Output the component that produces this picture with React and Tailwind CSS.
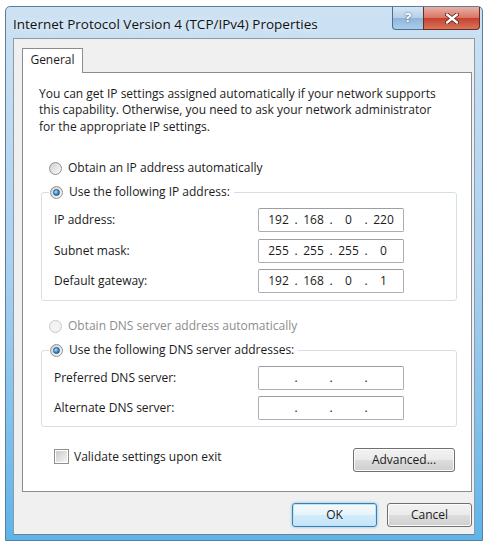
import React from "react";

const ui = "font-['Open_Sans',sans-serif] text-[12px] text-[#1b1b1b]";

function Radio({ checked, disabled }) {
  return (
    <span
      className={`flex h-[13px] w-[13px] shrink-0 items-center justify-center rounded-full border ${
        disabled
          ? "border-[#c9c9c9] bg-[#f3f3f3]"
          : "border-[#8e8f8f] bg-linear-to-br from-[#cfcfcf] to-[#fbfbfb]"
      }`}
    >
      {checked && (
        <span className="h-[7px] w-[7px] rounded-full border border-[#1c5b90] bg-[radial-gradient(circle_at_35%_35%,#b4e2fa,#2f82c6_60%,#15568f)]" />
      )}
    </span>
  );
}

function IpField({ parts = ["", "", "", ""] }) {
  return (
    <div className="flex h-[24px] w-[146px] items-center rounded-[2px] border border-[#abadb3] border-t-[#9a9ea5] bg-white pl-[4px]">
      {parts.map((p, i) => (
        <React.Fragment key={i}>
          <span className="w-[31px] text-center">{p}</span>
          {i < 3 && <span className="w-[4px] text-center">.</span>}
        </React.Fragment>
      ))}
    </div>
  );
}

function Row({ label, parts }) {
  return (
    <div className="flex h-[24px] items-center">
      <span className="w-[204px]">{label}</span>
      <IpField parts={parts} />
    </div>
  );
}

const btn =
  "flex h-[24px] items-center justify-center rounded-[3px] border border-[#707070] bg-[linear-gradient(#f2f2f2_0%,#ebebeb_50%,#dddddd_50%,#cfcfcf_100%)] shadow-[inset_0_0_0_1px_#fbfbfb]";

export default function App() {
  return (
    <div className={`h-[550px] w-[492px] bg-white pl-[5px] pt-[6px] ${ui}`}>
      <div className="flex h-[535px] w-[478px] flex-col rounded-t-[5px] border border-[#5d7d9c] bg-linear-to-b from-[#cde2f3] via-[#a8d0ef] to-[#5cb5ea]">
        {/* title bar */}
        <div className="flex h-[31px] items-start justify-between">
          <span className="pl-[7px] pt-[7px] text-[13.5px] text-[#111] [text-shadow:0_0_6px_#ffffff]">
            Internet Protocol Version 4 (TCP/IPv4) Properties
          </span>
          <div className="mr-[2px] flex">
            <div className="flex h-[23px] w-[31px] items-center justify-center rounded-bl-[4px] border border-t-0 border-r-0 border-[#4d6e8f] bg-[linear-gradient(#d4e6f5_0%,#b3cfe8_50%,#8fb4d8_50%,#a9cdea_100%)] text-[13px] font-bold text-white [text-shadow:0_0_2px_#2a4a6a]">
              ?
            </div>
            <div className="flex h-[23px] w-[57px] items-center justify-center rounded-br-[4px] border border-t-0 border-[#6b2a22] bg-[linear-gradient(#eab0a4_0%,#d87464_50%,#c4402e_50%,#d9755a_100%)]">
              <svg width="14" height="11" viewBox="0 0 14 11">
                <path
                  d="M2 1.5 L12 9.5 M12 1.5 L2 9.5"
                  stroke="#5a1d16"
                  strokeWidth="4"
                  strokeLinecap="round"
                />
                <path
                  d="M2 1.5 L12 9.5 M12 1.5 L2 9.5"
                  stroke="#ffffff"
                  strokeWidth="2.4"
                  strokeLinecap="round"
                />
              </svg>
            </div>
          </div>
        </div>

        {/* client area */}
        <div className="mx-[7px] flex h-[497px] flex-col border border-[#8e9aa6] border-b-[#6f7f8e] bg-[#f0f0f0] pl-[8px] pt-[9px]">
          <div className="relative z-10 flex h-[25px] w-[61px] items-center justify-center border border-b-0 border-[#898c95] bg-white pb-[2px]">
            General
          </div>
          <div className="-mt-px h-[420px] w-[450px] border border-[#898c95] bg-white pl-[16px] pt-[13px]">
            <p className="whitespace-nowrap leading-[16.4px]">
              You can get IP settings assigned automatically if your network supports
              <br />
              this capability. Otherwise, you need to ask your network administrator
              <br />
              for the appropriate IP settings.
            </p>

            <div className="mt-[25px] flex h-[16px] items-center gap-[6px] pl-[10px]">
              <Radio />
              <span>Obtain an IP address automatically</span>
            </div>

            <fieldset className="ml-[2px] mt-[8px] w-[416px] rounded-[3px] border border-[#d5dfe5] pb-[7px]">
              <legend className="ml-[7px] flex h-[16px] items-center gap-[6px] px-px">
                <Radio checked />
                <span className="pr-[3px]">Use the following IP address:</span>
              </legend>
              <div className="flex flex-col gap-[6.5px] pl-[12px] pt-[8px]">
                <Row label="IP address:" parts={["192", "168", "0", "220"]} />
                <Row label="Subnet mask:" parts={["255", "255", "255", "0"]} />
                <Row label="Default gateway:" parts={["192", "168", "0", "1"]} />
              </div>
            </fieldset>

            <div className="mt-[17px] flex h-[16px] items-center gap-[6px] pl-[10px] text-[#8d8d8d]">
              <Radio disabled />
              <span>Obtain DNS server address automatically</span>
            </div>

            <fieldset className="ml-[2px] mt-[8px] w-[416px] rounded-[3px] border border-[#d5dfe5] pb-[6px]">
              <legend className="ml-[7px] flex h-[16px] items-center gap-[6px] px-px">
                <Radio checked />
                <span className="pr-[3px]">Use the following DNS server addresses:</span>
              </legend>
              <div className="flex flex-col gap-[6px] pl-[12px] pt-[8px]">
                <Row label="Preferred DNS server:" />
                <Row label="Alternate DNS server:" />
              </div>
            </fieldset>

            <div className="mt-[20px] flex w-[416px] items-start justify-between">
              <div className="mt-[2px] flex h-[15px] items-center gap-[5px] pl-[15px]">
                <span className="flex h-[15px] w-[15px] items-center justify-center border border-[#8e8f8f] bg-white">
                  <span className="h-[11px] w-[11px] bg-linear-to-br from-[#cbcbcb] to-[#f6f6f6]" />
                </span>
                <span>Validate settings upon exit</span>
              </div>
              <button className={`${btn} mt-px w-[102px]`}>Advanced...</button>
            </div>
          </div>

          <div className="mt-[11px] flex w-[450px] justify-end gap-[10px]">
            <button className="flex h-[24px] w-[85px] items-center justify-center rounded-[3px] border border-[#3c7fb1] bg-[linear-gradient(#f4fafe_0%,#e6f4fc_50%,#d3ecfa_50%,#c4e5f8_100%)] shadow-[inset_0_0_0_1px_#bfe3f8,0_0_3px_#6fbbe6]">
              OK
            </button>
            <button className={`${btn} w-[85px]`}>Cancel</button>
          </div>
        </div>
      </div>
    </div>
  );
}
